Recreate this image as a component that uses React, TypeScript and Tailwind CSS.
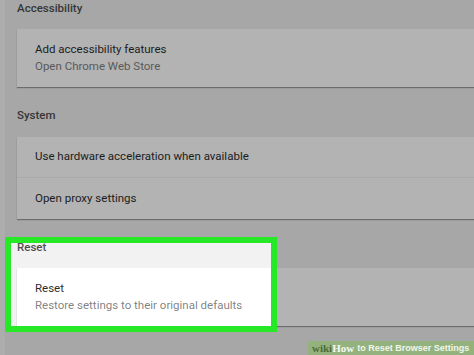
export default function App() {
  return (
    <div className="relative h-[355px] w-[474px] overflow-hidden bg-[#a7a7a7] font-['Roboto',sans-serif]">
      <div className="absolute left-0 top-0 h-full w-[5px] bg-[#adadad]" />
      <div className="flex flex-col pl-[17px]">
        {/* Accessibility */}
        <div className="flex h-[18px] items-center text-[11.5px] font-medium text-[#363636]">Accessibility</div>
        <div className="mt-[11px] h-[58px] bg-[#b3b3b3] pl-[18px] pt-[13px] shadow-[0_1px_1px_rgba(0,0,0,0.35)]">
          <div className="text-[11.5px] leading-[14px] text-[#1c1c1c]">Add accessibility features</div>
          <div className="mt-[3px] text-[11.5px] leading-[14px] text-[#5a5a5a]">Open Chrome Web Store</div>
        </div>

        {/* System */}
        <div className="mt-[20px] flex h-[18px] items-center text-[11.5px] font-medium text-[#363636]">System</div>
        <div className="mt-[12px] flex flex-col bg-[#b3b3b3] shadow-[0_1px_1px_rgba(0,0,0,0.35)]">
          <div className="flex h-[41px] items-center border-b border-[#a9a9a9] pl-[18px] text-[11.5px] text-[#1c1c1c]">
            Use hardware acceleration when available
          </div>
          <div className="flex h-[41px] items-center pl-[18px] text-[11.5px] text-[#1c1c1c]">Open proxy settings</div>
        </div>

        {/* Reset */}
        <div className="mt-[20px] flex h-[18px] items-center text-[11.5px] font-medium text-[#363636]">Reset</div>
        <div className="mt-[11px] h-[58px] bg-[#b3b3b3] pl-[18px] pt-[13px] shadow-[0_1px_1px_rgba(0,0,0,0.35)]">
          <div className="text-[11.5px] leading-[14px] text-[#1c1c1c]">Reset</div>
          <div className="mt-[3px] text-[11.5px] leading-[14px] text-[#5a5a5a]">Restore settings to their original defaults</div>
        </div>
      </div>

      {/* highlight */}
      <div className="absolute left-[5px] top-[237px] h-[95px] w-[272px] border-[6px] border-[#27e827] backdrop-brightness-[1.45]" />

      {/* watermark */}
      <div className="absolute left-[308px] top-[341px] flex h-[14px] w-[166px] items-center gap-[3px] bg-[#93b27e] pl-[4px] whitespace-nowrap">
        <span className="font-['Liberation_Serif',serif] text-[11px] font-bold leading-none">
          <span className="text-[#4e6a3a]">wiki</span>
          <span className="text-[#f4f8f0]">How</span>
        </span>
        <span className="font-['Liberation_Sans',sans-serif] text-[9px] font-bold leading-none text-[#f1f6ec]">to Reset Browser Settings</span>
      </div>
    </div>
  );
}
